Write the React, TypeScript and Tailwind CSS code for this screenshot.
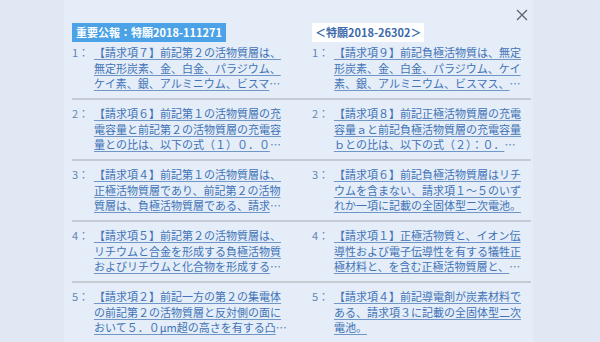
import React from "react";

type Item = { n: string; lines: string[]; more: boolean };

const left: Item[] = [
  { n: "1", lines: ["【請求項７】前記第２の活物質層は、", "無定形炭素、金、白金、パラジウム、", "ケイ素、銀、アルミニウム、ビスマ"], more: true },
  { n: "2", lines: ["【請求項６】前記第１の活物質層の充", "電容量と前記第２の活物質層の充電容", "量との比は、以下の式（１）０．０"], more: true },
  { n: "3", lines: ["【請求項４】前記第１の活物質層は、", "正極活物質層であり、前記第２の活物", "質層は、負極活物質層である、請求"], more: true },
  { n: "4", lines: ["【請求項５】前記第２の活物質層は、", "リチウムと合金を形成する負極活物質", "およびリチウムと化合物を形成する"], more: true },
  { n: "5", lines: ["【請求項２】前記一方の第２の集電体", "の前記第２の活物質層と反対側の面に", "おいて５．０μm超の高さを有する凸"], more: true },
];

const right: Item[] = [
  { n: "1", lines: ["【請求項９】前記負極活物質は、無定", "形炭素、金、白金、パラジウム、ケイ", "素、銀、アルミニウム、ビスマス、"], more: true },
  { n: "2", lines: ["【請求項８】前記正極活物質層の充電", "容量ａと前記負極活物質層の充電容量", "ｂとの比は、以下の式（２）：０．"], more: true },
  { n: "3", lines: ["【請求項６】前記負極活物質層はリチ", "ウムを含まない、請求項１～５のいず", "れか一項に記載の全固体型二次電池。"], more: false },
  { n: "4", lines: ["【請求項１】正極活物質と、イオン伝", "導性および電子伝導性を有する犠牲正", "極材料と、を含む正極活物質層と、"], more: true },
  { n: "5", lines: ["【請求項４】前記導電剤が炭素材料で", "ある、請求項３に記載の全固体型二次", "電池。"], more: false },
];

function Cell({ item }: { item: Item }) {
  return (
    <div className="flex">
      <div className="w-[22px] shrink-0 text-[#6585b3]">{item.n}：</div>
      <div className="flex flex-col">
        {item.lines.map((l, i) => (
          <div key={i} className="whitespace-nowrap">
            <a href="#" className="text-[#4273b6] underline decoration-[#7096c8] underline-offset-[2px]">
              {l}
            </a>
            {item.more && i === item.lines.length - 1 ? <span className="text-[#5a7fb4]">…</span> : null}
          </div>
        ))}
      </div>
    </div>
  );
}

export default function App() {
  return (
    <div
      className="w-[600px] h-[342px] bg-[#dfe8f3] flex overflow-hidden"
      style={{ fontFamily: '"Noto Sans CJK JP", "Noto Sans", sans-serif' }}
    >
      <div className="relative ml-[64px] w-[469px] h-full bg-[#e4edf8] pl-[8px] pt-[23px]">
        <button className="absolute right-[5px] top-[9px] w-[12px] h-[12px]" aria-label="close">
          <svg viewBox="0 0 12 12" width="12" height="12">
            <path d="M1 1 L11 11 M11 1 L1 11" stroke="#5f6368" strokeWidth="1.3" fill="none" />
          </svg>
        </button>
        <div className="w-[459px] text-[11px] leading-[15.5px]">
          <div className="grid grid-cols-[240px_1fr]">
            <div>
              <span className="inline-block bg-[#4ba2e6] text-white font-bold text-[11px] leading-[19px] px-[4px]">
                重要公報：特願2018-111271
              </span>
            </div>
            <div>
              <span className="inline-block bg-white text-[#3c6aaa] font-bold text-[11px] leading-[19px] px-[3px]">
                ＜特願2018-26302＞
              </span>
            </div>
          </div>
          {left.map((it, i) => (
            <div
              key={i}
              className={
                "grid grid-cols-[240px_1fr] " +
                (i === 0 ? "pt-[3px] " : "pt-[6px] ") +
                (i < left.length - 1 ? "pb-[6.5px] border-b-2 border-[#c7ccd2]" : "pb-[6px]")
              }
            >
              <Cell item={it} />
              <Cell item={right[i]} />
            </div>
          ))}
        </div>
      </div>
    </div>
  );
}
